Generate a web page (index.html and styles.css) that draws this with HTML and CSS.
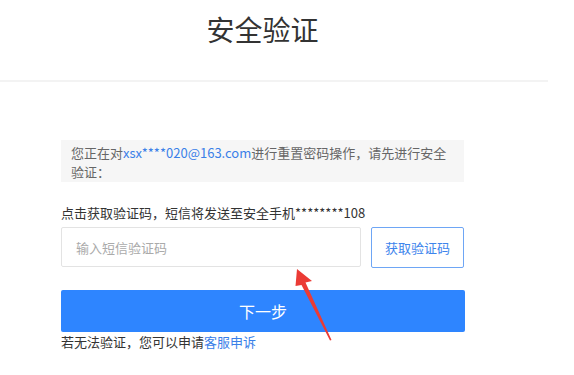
FILE: index.html
```html
<!DOCTYPE html>
<html lang="zh-CN">
<head>
    <meta charset="UTF-8">
    <meta name="viewport" content="width=device-width, initial-scale=1.0">
    <title>安全验证</title>
    <link rel="stylesheet" href="styles.css">
</head>
<body>

<div class="page">
    <div class="header">
        <h1>安全验证</h1>
    </div>

    <div class="main">
        <div class="notice">
            您正在对<span class="blue">xsx****020@163.com</span>进行重置密码操作，请先进行安全<br>验证：
        </div>

        <div class="label">点击获取验证码，短信将发送至安全手机********108</div>
        <div class="code-row">
            <input type="text" class="code-input" placeholder="输入短信验证码">
            <button type="button" class="btn-code">获取验证码</button>
        </div>

        <button type="button" class="btn-next">下一步</button>
        <div class="help">若无法验证，您可以申请<a href="#">客服申诉</a></div>
    </div>

    <svg class="arrow" viewBox="0 0 574 375" width="574" height="375">
        <polygon points="297,269 312,281 305.5,282.5 331.5,340 330,340.5 301.5,285 295.5,286" fill="#eb3b35"/>
    </svg>
</div>

</body>
</html>
```

FILE: styles.css
```css
body {
    margin: 0;
    font-family: "Noto Sans CJK SC", "Noto Sans", sans-serif;
    background-color: #fff;
    color: #333;
}
.page {
    position: relative;
    width: 574px;
    height: 375px;
    overflow: hidden;
}
.header {
    width: 548px;
    height: 82px;
    border-bottom: 2px solid #f3f3f3;
    box-sizing: border-box;
    padding-top: 9px;
}
h1 {
    margin: 0 0 0 61px;
    width: 403px;
    text-align: center;
    font-size: 28px;
    font-weight: normal;
    line-height: 40px;
    color: #333;
}
.main {
    margin-left: 61px;
    width: 403px;
    padding-top: 58px;
}
.notice {
    background-color: #f6f6f6;
    padding: 3px 14px 1px 10px;
    font-size: 13px;
    line-height: 19px;
    color: #666;
}
.blue {
    color: #3a80e8;
}
.label {
    margin-top: 21px;
    font-size: 13px;
    line-height: 19px;
    color: #333;
}
.code-row {
    display: flex;
    gap: 10px;
    margin-top: 5px;
}
.code-input {
    width: 301px;
    height: 40px;
    box-sizing: border-box;
    border: 1px solid #e3e3e3;
    border-radius: 2px;
    padding: 0 14px;
    font-family: inherit;
    font-size: 13px;
    outline: none;
}
.code-input::placeholder {
    color: #aaa;
}
.btn-code {
    width: 93px;
    height: 41px;
    box-sizing: border-box;
    background-color: #fff;
    border: 1px solid #6ea6f5;
    border-radius: 2px;
    color: #3d84ec;
    font-family: inherit;
    font-size: 13px;
    padding: 0;
    cursor: pointer;
}
.btn-next {
    display: block;
    width: 404px;
    height: 42px;
    margin-top: 22px;
    border: none;
    border-radius: 2px;
    background-color: #2e85ff;
    color: #fff;
    font-family: inherit;
    font-size: 16px;
    cursor: pointer;
}
.help {
    font-size: 13px;
    line-height: 19px;
    color: #333;
}
.help a {
    color: #3a80e8;
    text-decoration: none;
}
.arrow {
    position: absolute;
    left: 0;
    top: 0;
    pointer-events: none;
}
```
